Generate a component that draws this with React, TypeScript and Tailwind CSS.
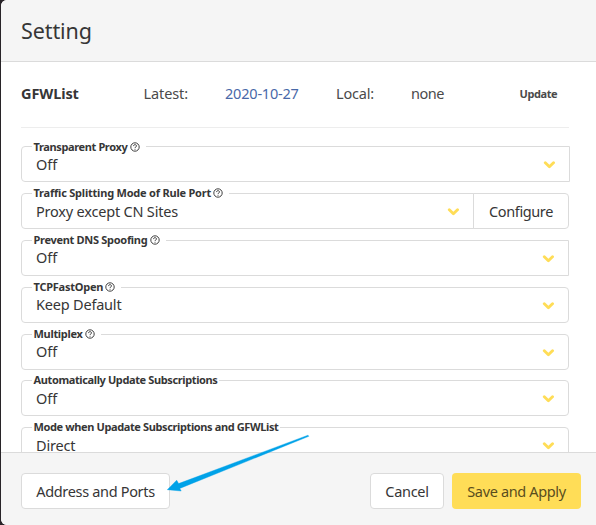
type FieldProps = {
  label: string;
  value: string;
  labelClass: string;
  legendClass: string;
  valueClass: string;
  boxClass?: string;
  help?: boolean;
  action?: string;
};

function Help() {
  return (
    <svg className="size-[10px] shrink-0" viewBox="0 0 10 10" fill="none" stroke="#363636">
      <circle cx="5" cy="5" r="4.2" strokeWidth=".95" />
      <path d="M3.5 4.1C3.5 2.2 6.5 2.2 6.5 4C6.5 5 5 4.9 5 6M5 6.8V7.7" strokeWidth=".95" />
    </svg>
  );
}

function Chevron() {
  return (
    <svg className="mr-[14px] mt-[2px] h-[8px] w-[12px] shrink-0" viewBox="0 0 12 8" fill="none">
      <path d="M2.3 1.8L6.4 5.7L10.5 1.8" stroke="#ffdd57" strokeWidth="2.9" strokeLinejoin="round" strokeLinecap="round" />
    </svg>
  );
}

function Field({ label, value, labelClass, legendClass, valueClass, boxClass = "w-[548px] rounded", help, action }: FieldProps) {
  return (
    <div className="relative flex h-9 shrink-0">
      <div className={"flex items-center justify-between border border-[#dbdbdb] pl-[14px] " + boxClass}>
        <span className={"whitespace-nowrap text-[14.5px] leading-5 " + valueClass}>{value}</span>
        <Chevron />
      </div>
      {action && (
        <button className="-ml-px h-9 w-[96px] rounded-r border border-[#dbdbdb] pt-[2px] text-[14.5px] tracking-[-0.38px]">{action}</button>
      )}
      <div className={"absolute left-[11px] flex h-4 items-center bg-white pl-[1.5px] " + legendClass}>
        <span className={"whitespace-nowrap text-[11px] font-bold leading-4 " + labelClass}>{label}</span>
        {help && <Help />}
      </div>
    </div>
  );
}

export default function App() {
  return (
    <div className="h-[525px] w-[596px] overflow-hidden bg-[#282428] pl-px font-['Noto_Sans',sans-serif] text-[#363636]">
      <div className="relative flex h-[525px] flex-col overflow-hidden rounded-l-[6px] bg-white">
        <header className="flex h-[62px] shrink-0 items-center border-b border-[#dbdbdb] bg-[#f5f5f5] pl-5">
          <h1 className="text-[21.5px] leading-6 tracking-[-0.1px]">Setting</h1>
        </header>

        <main className="flex min-h-0 flex-1 flex-col overflow-hidden pl-5">
          <div className="mb-[18px] flex h-[66px] w-[548px] shrink-0 items-center border-b border-[#ededed] pb-px text-[14.5px] text-[#4a4a4a]">
            <b className="w-[122.5px] text-[14.5px] tracking-[-0.1px] text-[#363636]">GFWList</b>
            <span className="w-[81.5px] tracking-[-0.1px]">Latest:</span>
            <a className="w-[111px] tracking-[-0.2px] text-[#4868a8]">2020-10-27</a>
            <span className="w-[75px] tracking-[-0.2px]">Local:</span>
            <span className="w-[108.5px] tracking-[-0.5px]">none</span>
            <b className="text-[11px] tracking-[-0.4px]">Update</b>
          </div>

          <div className="flex flex-col gap-[11px]">
            <Field label="Transparent Proxy" value="Off" help boxClass="w-[549px] rounded-l" legendClass="-top-[7px] w-[114px]" labelClass="w-[96px] tracking-[-0.37px]" valueClass="pb-px tracking-[0px]" />
            <Field label="Traffic Splitting Mode of Rule Port" value="Proxy except CN Sites" help action="Configure" boxClass="w-[453px] rounded-l" legendClass="-top-2 w-[197px]" labelClass="w-[179px] tracking-[-0.21px]" valueClass="pb-px tracking-[-0.2px]" />
            <Field label="Prevent DNS Spoofing" value="Off" help boxClass="w-[548px] rounded-l" legendClass="-top-2 w-[134px]" labelClass="w-[116px] tracking-[-0.3px]" valueClass="pb-[3px] tracking-[0px]" />
            <Field label="TCPFastOpen" value="Keep Default" help legendClass="-top-2 w-[89px]" labelClass="w-[71px] tracking-[-0.24px]" valueClass="pb-[3px] tracking-[-0.2px]" />
            <Field label="Multiplex" value="Off" help legendClass="-top-2 w-[69px]" labelClass="w-[51px] tracking-[-0.3px]" valueClass="pb-[3px] tracking-[0px]" />
            <div className="-mt-px">
              <Field label="Automatically Update Subscriptions" value="Off" legendClass="-top-2 w-[187px]" labelClass="tracking-[-0.38px]" valueClass="pb-px tracking-[0px]" />
            </div>
            <Field label="Mode when Upadate Subscriptions and GFWList" value="Direct" legendClass="-top-2 w-[248px]" labelClass="tracking-[-0.38px]" valueClass="pb-px tracking-[-0.2px]" />
          </div>
        </main>

        <footer className="flex h-[73px] shrink-0 border-t border-[#dbdbdb] bg-[#f5f5f5] pl-5 pt-5 text-[14.5px]">
          <button className="h-9 w-[149px] whitespace-nowrap rounded border border-[#dbdbdb] bg-white pt-[2px] tracking-[-0.33px]">Address and Ports</button>
          <button className="ml-[200px] h-9 w-[74px] whitespace-nowrap rounded border border-[#dbdbdb] bg-white pt-[2px] tracking-[-0.3px]">Cancel</button>
          <button className="ml-2 h-9 w-[129px] whitespace-nowrap rounded bg-[#ffdd57] pt-[2px] tracking-[-0.35px] text-[#594d1e]">Save and Apply</button>
        </footer>

        <svg className="pointer-events-none absolute left-[165px] top-[434px] h-[60px] w-[145px]" viewBox="166 434 145 60">
          <path d="M167.3 489.7L176.7 480.2L178.6 483.6L308 435.2L308.8 436.3L179.8 488.4L181.2 491Z" fill="#00a2e8" stroke="#00a2e8" strokeWidth=".4" />
        </svg>
      </div>
    </div>
  );
}
